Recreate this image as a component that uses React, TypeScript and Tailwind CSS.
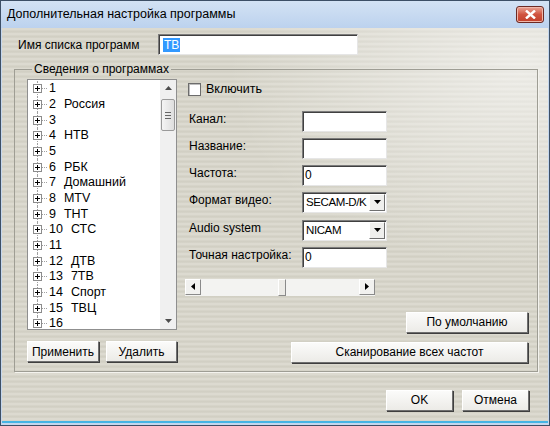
import React from "react";

const channels: [string, string][] = [
  ["1", ""],
  ["2", "Россия"],
  ["3", ""],
  ["4", "НТВ"],
  ["5", ""],
  ["6", "РБК"],
  ["7", "Домашний"],
  ["8", "MTV"],
  ["9", "ТНТ"],
  ["10", "СТС"],
  ["11", ""],
  ["12", "ДТВ"],
  ["13", "7ТВ"],
  ["14", "Спорт"],
  ["15", "ТВЦ"],
  ["16", ""],
];

function Btn({ label, className = "" }: { label: string; className?: string }) {
  return (
    <div
      className={
        "flex h-[21px] items-center justify-center border border-t-white border-l-white border-r-[#6f6f6f] border-b-[#6f6f6f] bg-gradient-to-b from-[#fbfbfa] to-[#ecebe7] text-[12px] text-black shadow-[1px_1px_0_#3f3f3f] " +
        className
      }
    >
      {label}
    </div>
  );
}

function Field({ value = "", className = "" }: { value?: string; className?: string }) {
  return (
    <div
      className={
        "flex h-[21px] items-center border border-t-[#7c7c7c] border-l-[#7c7c7c] border-r-[#e6e6e6] border-b-[#e6e6e6] bg-white pl-[2px] text-[12px] shadow-[inset_1px_1px_0_#404040] " +
        className
      }
    >
      {value}
    </div>
  );
}

function Combo({ value }: { value: string }) {
  return (
    <div className="flex h-[21px] w-[85px] items-center border border-t-[#7c7c7c] border-l-[#7c7c7c] border-r-[#e6e6e6] border-b-[#e6e6e6] bg-white shadow-[inset_1px_1px_0_#404040]">
      <span className="flex-1 overflow-hidden whitespace-nowrap pl-[3px] text-[11.5px] tracking-[-0.4px]">{value}</span>
      <div className="mr-[1px] flex h-[17px] w-[16px] shrink-0 items-center justify-center border border-t-white border-l-white border-r-[#6f6f6f] border-b-[#6f6f6f] bg-[#efefed]">
        <svg width="7" height="4" viewBox="0 0 7 4">
          <path d="M0 0h7L3.5 4z" fill="#000" />
        </svg>
      </div>
    </div>
  );
}

function ScrollBtn({ dir }: { dir: "up" | "down" | "left" | "right" }) {
  const paths = {
    up: "M0 4h7L3.5 0z",
    down: "M0 0h7L3.5 4z",
    left: "M4 0v7L0 3.5z",
    right: "M0 0v7L4 3.5z",
  };
  const horiz = dir === "left" || dir === "right";
  return (
    <div
      className={
        "flex items-center justify-center " +
        (horiz
          ? "h-[16px] w-[16px] border border-t-white border-l-white border-r-[#8a8a8a] border-b-[#8a8a8a] bg-[#f1f1ef]"
          : "h-[16px] w-[16px]")
      }
    >
      <svg width={horiz ? 4 : 7} height={horiz ? 7 : 4} viewBox={horiz ? "0 0 4 7" : "0 0 7 4"}>
        <path d={paths[dir]} fill={horiz ? "#000" : "#4d4d4d"} />
      </svg>
    </div>
  );
}

function TreeRow({ num, name }: { num: string; name: string }) {
  return (
    <div className="flex h-[15.67px] items-center">
      <div className="relative ml-[5px] flex h-full w-[9px] items-center justify-center">
        <div className="absolute left-[4px] top-0 h-full border-l border-dotted border-[#a0a0a0]" />
        <div className="relative flex h-[9px] w-[9px] items-center justify-center border border-[#8c8c8c] bg-white">
          <svg width="5" height="5" viewBox="0 0 5 5">
            <path d="M0 2h5v1H0zM2 0h1v5H2z" fill="#000" />
          </svg>
        </div>
      </div>
      <div className="w-[5px] border-t border-dotted border-[#a0a0a0]" />
      <span className="ml-[2px]">{num}</span>
      {name && <span className="ml-[8px]">{name}</span>}
    </div>
  );
}

export default function App() {
  return (
    <div
      className="flex h-[426px] w-[550px] flex-col overflow-hidden border border-[#3d4f66] bg-[#c4d7ee] text-black"
      style={{ fontFamily: '"Liberation Sans", Arial, sans-serif' }}
    >
      {/* title bar */}
      <div className="flex h-[27px] shrink-0 items-center justify-between bg-gradient-to-b from-[#d3e2f4] to-[#bcd2ee] pl-[6px] pr-[5px]">
        <span className="text-[12.5px]">Дополнительная настройка программы</span>
        <div className="flex h-[17px] w-[28px] items-center justify-center rounded-[3px] border border-[#6d2a24] bg-gradient-to-b from-[#e8a395] via-[#d0533f] to-[#c2402b] shadow-[inset_0_0_0_1px_#f0b8ab]">
          <svg width="11" height="9" viewBox="0 0 11 9">
            <path d="M1 0.5l9 8M10 0.5l-9 8" stroke="#fff" strokeWidth="2.4" />
          </svg>
        </div>
      </div>

      {/* body */}
      <div className="mx-[1px] mb-[2px] flex flex-1 flex-col border-b-2 border-[#45b4e4] bg-[radial-gradient(ellipse_at_95%_10%,rgba(255,255,255,0.55),rgba(255,255,255,0)_40%),repeating-linear-gradient(180deg,#dcdad0_0px,#dcdad0_2px,#d0cec2_3px,#d6d4c9_5px)] text-[12px]">
        <div className="flex items-center pl-[16px] pt-[6px]">
          <span className="w-[140px]">Имя списка программ</span>
          <Field className="w-[200px]" value="" />
        </div>
        <div className="-mt-[21px] ml-[158px] flex h-[21px] items-center pl-[3px]">
          <span className="bg-[#3399ff] px-[1px] leading-[14px] text-white">ТВ</span>
        </div>

        <fieldset className="ml-[12px] mt-[7px] w-[524px] border border-[#9e9d94] pb-[8px] pl-[12px] pr-[9px] shadow-[1px_1px_0_#f4f3ee]">
          <legend className="ml-[5px] px-[2px] leading-[14px]">Сведения о программах</legend>
          <div className="mt-[3px] flex">
            {/* left column */}
            <div className="flex w-[150px] flex-col">
              <div className="flex h-[251px] border border-[#8f8f8f] bg-white">
                <div className="flex-1 overflow-hidden pt-[1px] text-[12.5px]">
                  {channels.map(([n, name]) => (
                    <TreeRow key={n} num={n} name={name} />
                  ))}
                </div>
                <div className="flex w-[16px] flex-col bg-[#f0f0f0]">
                  <ScrollBtn dir="up" />
                  <div className="mx-[1px] mt-[3px] flex h-[32px] flex-col items-center justify-center gap-[2px] rounded-[2px] border border-[#9a9a9a] bg-gradient-to-r from-[#f4f4f4] to-[#dedede]">
                    <div className="h-[1px] w-[6px] bg-[#666]" />
                    <div className="h-[1px] w-[6px] bg-[#666]" />
                    <div className="h-[1px] w-[6px] bg-[#666]" />
                  </div>
                  <div className="flex-1" />
                  <ScrollBtn dir="down" />
                </div>
              </div>
              <div className="mt-[11px] flex justify-between">
                <Btn label="Применить" className="w-[72px]" />
                <Btn label="Удалить" className="w-[71px]" />
              </div>
            </div>

            {/* right column */}
            <div className="ml-[8px] flex flex-1 flex-col">
              <div className="ml-[3px] mt-[1px] flex items-center">
                <div className="h-[13px] w-[13px] border border-[#6c6c6c] bg-white shadow-[inset_1px_1px_0_#bdbdbd]" />
                <span className="ml-[5px] text-[12.5px]">Включить</span>
              </div>
              <div className="ml-[4px] mt-[12px] flex flex-col gap-[6px]">
                {[
                  ["Канал:", "field", ""],
                  ["Название:", "field", ""],
                  ["Частота:", "field", "0"],
                  ["Формат видео:", "combo", "SECAM-D/K"],
                  ["Audio system", "combo", "NICAM"],
                  ["Точная настройка:", "field", "0"],
                ].map(([label, kind, value], i) => (
                  <div key={label} className={"flex items-center " + (i === 4 ? "mt-[1px]" : "")}>
                    <span className="-mt-[4px] w-[113px]">{label}</span>
                    {kind === "combo" ? <Combo value={value} /> : <Field className="w-[85px]" value={value} />}
                  </div>
                ))}
              </div>
              <div className="mt-[11px] flex h-[17px] w-[190px] bg-[#f3f3f1]">
                <ScrollBtn dir="left" />
                <div className="w-[77px]" />
                <div className="h-[17px] w-[8px] border border-t-white border-l-white border-r-[#8a8a8a] border-b-[#8a8a8a] bg-[#ecebe7]" />
                <div className="flex-1" />
                <ScrollBtn dir="right" />
              </div>
              <div className="mt-[16px] flex justify-end">
                <Btn label="По умолчанию" className="w-[122px]" />
              </div>
              <div className="mt-[9px] flex justify-end">
                <Btn label="Сканирование всех частот" className="w-[237px]" />
              </div>
            </div>
          </div>
        </fieldset>

        <div className="mr-[19px] mt-[18px] flex justify-end gap-[9px]">
          <Btn label="OK" className="w-[67px]" />
          <Btn label="Отмена" className="w-[67px]" />
        </div>
      </div>
    </div>
  );
}
